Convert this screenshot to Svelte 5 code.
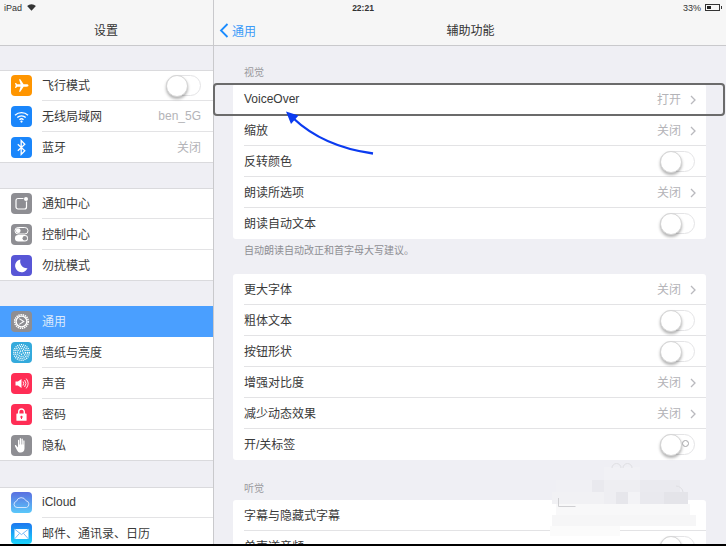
<script>
	const groups = [
		[
			{ label: '飞行模式', icon: 'plane', bg: '#ff9500', toggle: true },
			{ label: '无线局域网', icon: 'wifi', bg: '#1a86fb', value: 'ben_5G' },
			{ label: '蓝牙', icon: 'bluetooth', bg: '#1a86fb', value: '关闭' }
		],
		[
			{ label: '通知中心', icon: 'notify', bg: '#8e8e93' },
			{ label: '控制中心', icon: 'control', bg: '#8e8e93' },
			{ label: '勿扰模式', icon: 'moon', bg: '#5856d6' }
		],
		[
			{ label: '通用', icon: 'gear', bg: '#8e8e93', active: true },
			{ label: '墙纸与亮度', icon: 'flower', bg: '#34aadc' },
			{ label: '声音', icon: 'sound', bg: '#ff2d55' },
			{ label: '密码', icon: 'lock', bg: '#ff2d55' },
			{ label: '隐私', icon: 'hand', bg: '#8e8e93' }
		],
		[
			{ label: 'iCloud', icon: 'cloud', bg: 'linear-gradient(#5a6fe0,#5ac8fa)' },
			{ label: '邮件、通讯录、日历', icon: 'mail', bg: 'linear-gradient(#1d77ef,#1ad5fd)' }
		]
	];

	const sections = [
		{
			title: '视觉',
			note: '自动朗读自动改正和首字母大写建议。',
			rows: [
				{ label: 'VoiceOver', value: '打开' },
				{ label: '缩放', value: '关闭' },
				{ label: '反转颜色', toggle: true },
				{ label: '朗读所选项', value: '关闭' },
				{ label: '朗读自动文本', toggle: true }
			]
		},
		{
			rows: [
				{ label: '更大字体', value: '关闭' },
				{ label: '粗体文本', toggle: true },
				{ label: '按钮形状', toggle: true },
				{ label: '增强对比度', value: '关闭' },
				{ label: '减少动态效果', value: '关闭' },
				{ label: '开/关标签', toggle: true, ring: true }
			]
		},
		{
			title: '听觉',
			rows: [
				{ label: '字幕与隐藏式字幕' },
				{ label: '单声道音频', toggle: true }
			]
		}
	];

	// smudge that hides a watermark in the original shot
	const mosaic = [
		{ x: 604, y: 467, w: 36, h: 13, c: '#f1f1f5' },
		{ x: 556, y: 480, w: 36, h: 12, c: '#f0f0f4' },
		{ x: 592, y: 480, w: 12, h: 12, c: '#e9e9ee' },
		{ x: 604, y: 480, w: 36, h: 12, c: '#eeeef2' },
		{ x: 640, y: 480, w: 40, h: 12, c: '#eaeaef' },
		{ x: 552, y: 492, w: 52, h: 12, c: '#f1f1f4' },
		{ x: 604, y: 492, w: 12, h: 12, c: '#eeeef2' },
		{ x: 616, y: 492, w: 12, h: 12, c: '#e6e6eb' },
		{ x: 628, y: 492, w: 12, h: 12, c: '#f3f3f6' },
		{ x: 640, y: 492, w: 24, h: 12, c: '#e9e9ee' },
		{ x: 664, y: 492, w: 24, h: 12, c: '#e4e4e9' },
		{ x: 556, y: 504, w: 134, h: 11, c: '#f8f8f9' },
		{ x: 552, y: 515, w: 144, h: 11, c: '#f6f6f7' },
		{ x: 550, y: 526, w: 70, h: 10, c: '#fbfbfb' }
	];
</script>

{#snippet icon(name)}
	<svg viewBox="0 0 21 21" width="21" height="21">
		{#if name === 'plane'}
			<path fill="#fff" d="M17.5 10.500c0-.8-1-1.200-2-1.200h-2.900L9.300 4.200H8l1.600 5.100H6.200L5 7.900H4l.7 2.600L4 13.100h1l1.200-1.400h3.400L8 16.800h1.300l3.300-5.100h2.900c1 0 2-.4 2-1.200z" />
		{:else if name === 'wifi'}
			<g fill="none" stroke="#fff" stroke-width="1.400">
				<path d="M4 9.200a9.400 9.400 0 0 1 13 0" />
				<path d="M6.300 11.600a6 6 0 0 1 8.400 0" />
				<path d="M8.500 13.800a2.900 2.900 0 0 1 4 0" />
			</g>
			<circle cx="10.500" cy="15.600" r="1.100" fill="#fff" />
		{:else if name === 'bluetooth'}
			<path fill="none" stroke="#fff" stroke-width="1.300" d="M6.800 7.200l7 6.600-3.600 3.600V3.600l3.600 3.600-7 6.600" />
		{:else if name === 'notify'}
			<rect x="5" y="5.500" width="10.500" height="10.500" rx="2" fill="none" stroke="#fff" stroke-width="1.200" />
			<circle cx="15" cy="6" r="2.600" fill="#8e8e93" />
			<circle cx="15" cy="6" r="2" fill="#fff" />
		{:else if name === 'control'}
			<rect x="4" y="3.500" width="13" height="6.500" rx="3.200" fill="none" stroke="#fff" stroke-width="1" />
			<circle cx="7.200" cy="6.700" r="2.400" fill="#fff" />
			<rect x="4" y="11" width="13" height="6.500" rx="3.200" fill="#fff" />
			<circle cx="13.800" cy="14.200" r="2.300" fill="#8e8e93" />
		{:else if name === 'moon'}
			<path fill="#fff" d="M9.500 4.500a6.400 6.400 0 1 0 7 8.600 6.600 6.600 0 0 1-7-8.600z" />
		{:else if name === 'gear'}
			<circle cx="10.500" cy="10.500" r="6.800" fill="none" stroke="#fff" stroke-width="1.600" stroke-dasharray="1.400 0.800" />
			<circle cx="10.500" cy="10.500" r="5.400" fill="none" stroke="#fff" stroke-width="1.300" />
			<path fill="#fff" d="M8.600 7.200l5.200 3.300-5.200 3.300-.6-.9 3.800-2.400-3.800-2.400z" />
		{:else if name === 'flower'}
			<g fill="none" stroke="#fff" stroke-width="1.300" stroke-dasharray="1.100 0.900">
				<circle cx="10.500" cy="10.500" r="1.800" />
				<circle cx="10.500" cy="10.500" r="4" />
				<circle cx="10.500" cy="10.500" r="6" />
				<circle cx="10.500" cy="10.500" r="7.800" />
			</g>
		{:else if name === 'sound'}
			<path fill="#fff" d="M4.500 8.500h2.400L10.500 6v9l-3.600-2.500H4.500z" />
			<g fill="none" stroke="#fff" stroke-width="0.900">
				<path d="M12 8.500a3.400 3.400 0 0 1 0 4" />
				<path d="M13.600 7a5.600 5.600 0 0 1 0 7" />
				<path d="M15.200 5.600a7.800 7.800 0 0 1 0 9.800" />
			</g>
		{:else if name === 'lock'}
			<path fill="none" stroke="#fff" stroke-width="1.400" d="M7.700 10V7.800a2.800 2.800 0 0 1 5.600 0V10" />
			<path fill="#fff" fill-rule="evenodd" d="M6 9.600h9a.6.6 0 0 1 .6.6v6a.6.6 0 0 1-.6.6H6a.6.6 0 0 1-.6-.6v-6a.6.6 0 0 1 .6-.6zM10.500 11.800a1.100 1.100 0 0 0-.5 2.100v1.100h1v-1.100a1.100 1.100 0 0 0-.5-2.100z" />
		{:else if name === 'hand'}
			<path fill="#fff" d="M7 5.500c0-1 1.200-1 1.200 0v4h.5V3.800c0-1 1.300-1 1.300 0v5.700h.5V4.300c0-1 1.300-1 1.300 0v5.300h.5V6c0-1 1.200-1 1.200 0v7.500c0 2.400-1.600 4-3.800 4-2 0-3-1-3.800-2.600L4 11.200c-.4-1 .7-1.500 1.300-.7L7 12.500z" />
		{:else if name === 'cloud'}
			<path fill="none" stroke="#dfeaff" stroke-width="0.900" d="M6 15.500a3.200 3.200 0 0 1-.5-6.300 5 5 0 0 1 9.400-.5 3.500 3.500 0 0 1 .6 6.800z" />
		{:else if name === 'mail'}
			<rect x="3.500" y="6" width="14" height="10" fill="#fff" />
			<path fill="none" stroke="#5aa8f5" stroke-width="0.800" d="M3.500 6l7 5.600 7-5.600M3.500 16l5-5.600M17.500 16l-5-5.600" />
		{/if}
	</svg>
{/snippet}

{#snippet toggle(ring)}
	<span class="toggle">
		<span class="knob"></span>
		{#if ring}<span class="ring"></span>{/if}
	</span>
{/snippet}

<div class="screen">
	<div class="panes">
		<aside class="sidebar">
			<header class="nav"><span class="title">设置</span></header>
			{#each groups as rows}
				<ul class="group">
					{#each rows as row}
						<li class="side-row" class:active={row.active}>
							<span class="app-icon" style="background: {row.bg}">{@render icon(row.icon)}</span>
							<span class="side-inner">
								<span class="label">{row.label}</span>
								{#if row.toggle}
									{@render toggle(false)}
								{:else if row.value}
									<span class="value">{row.value}</span>
								{/if}
							</span>
						</li>
					{/each}
				</ul>
			{/each}
		</aside>

		<main class="detail">
			<header class="nav detail-nav">
				<span class="back">
					<svg viewBox="0 0 10 15" width="10" height="15">
						<path d="M8.500 1L2 7.500 8.500 14" fill="none" stroke="#1a8cff" stroke-width="1.800" />
					</svg>
					通用
				</span>
				<span class="title">辅助功能</span>
			</header>

			{#each sections as section, i}
				<div class="section-head" class:first={i === 0}>{section.title ?? ''}</div>
				<ul class="card">
					{#each section.rows as row}
						<li class="row">
							<span class="row-inner">
								<span class="label">{row.label}</span>
								{#if row.toggle}
									{@render toggle(row.ring)}
								{:else if row.value}
									<span class="value">{row.value}</span>
									<svg class="chevron" viewBox="0 0 6 10" width="6" height="10">
										<path d="M1 1l4 4-4 4" fill="none" stroke="#b9b9be" stroke-width="1.300" />
									</svg>
								{/if}
							</span>
						</li>
					{/each}
				</ul>
				{#if section.note}<p class="note">{section.note}</p>{/if}
			{/each}
		</main>
	</div>
	<div class="black-edge"></div>

	<div class="status">
		<span class="status-left">
			iPad
			<svg viewBox="0 0 10 8" width="9" height="7">
				<path fill="#333" d="M5 7.600L0 2.400a7.200 7.200 0 0 1 10 0z" />
			</svg>
		</span>
		<span class="status-time">22:21</span>
		<span class="status-right">
			33%
			<span class="battery"><span class="charge"></span></span>
		</span>
	</div>

	<div class="highlight"></div>

	{#each mosaic as m}
		<div class="smudge" style="left: {m.x}px; top: {m.y}px; width: {m.w}px; height: {m.h}px; background: {m.c}"></div>
	{/each}

	<svg class="overlay" viewBox="0 0 726 546" width="726" height="546">
		<path d="M373 153.500C340 149 313 137 293 118" fill="none" stroke="#0b3bf0" stroke-width="2.300" />
		<path d="M286 111.500L298.500 115.500 291 124z" fill="#0b3bf0" />
		<!-- bits of the watermark that show round the smudge -->
		<path d="M612 468a4 4 0 0 1 9 0M623 468a4 4 0 0 1 9 0M676 486a7 7 0 0 1 7 6" fill="none" stroke="#dfdfe3" stroke-width="1" />
		<path d="M558.500 498v8.500h17" fill="none" stroke="#cfcfd2" stroke-width="1" />
	</svg>
</div>

<style>
	:global(body) {
		margin: 0;
		background: #000;
	}

	ul {
		list-style: none;
		margin: 0;
		padding: 0;
	}

	.screen {
		position: relative;
		width: 726px;
		height: 546px;
		overflow: hidden;
		display: flex;
		flex-direction: column;
		font-family: "Liberation Sans", "Noto Sans CJK SC", sans-serif;
		font-size: 12px;
		color: #3a3a3a;
		background: #efeff4;
	}

	.panes {
		display: flex;
		height: 544px;
		overflow: hidden;
	}

	.black-edge {
		height: 2px;
		background: #000;
	}

	.sidebar {
		width: 213px;
		flex: none;
		border-right: 1px solid #c9c9cc;
		background: #efeff4;
	}

	.detail {
		flex: 1;
		background: #efeff4;
	}

	.nav {
		height: 29px;
		padding-top: 15px;
		padding-bottom: 1px;
		display: flex;
		align-items: center;
		justify-content: center;
		position: relative;
		background: #f6f6f6;
		border-bottom: 1px solid #c9c9cc;
	}

	.title {
		font-size: 12px;
		color: #333;
	}

	.sidebar .title {
		margin-right: 1px;
	}

	.detail-nav .title {
		margin-left: 1px;
	}

	.back {
		position: absolute;
		left: 5px;
		top: 15px;
		height: 30px;
		display: flex;
		align-items: center;
		gap: 3px;
		color: #3b9bf8;
	}

	.group {
		margin-bottom: 25px;
		background: #fff;
		box-shadow: inset 0 1px 0 #dadadd, inset 0 -1px 0 #dadadd;
	}

	.nav + .group {
		margin-top: 24px;
	}

	.group:last-child {
		margin-top: 26px;
	}

	.group:nth-child(4) {
		margin-bottom: 0;
	}

	.side-row {
		height: 31px;
		display: flex;
		align-items: center;
		padding-left: 11px;
	}

	.side-row.active {
		background: #4a9fff;
		color: #dbe9fb;
	}

	.app-icon {
		width: 21px;
		height: 21px;
		border-radius: 4px;
		flex: none;
		display: flex;
	}

	.side-inner {
		flex: 1;
		align-self: stretch;
		margin-left: 10px;
		padding-right: 12px;
		display: flex;
		align-items: center;
		justify-content: space-between;
		box-shadow: inset 0 -1px 0 #e3e3e5;
	}

	.side-row:last-child .side-inner,
	.side-row.active .side-inner {
		box-shadow: none;
	}

	.label,
	.value {
		padding-bottom: 2px;
	}

	.value {
		color: #b4b4b8;
	}

	.section-head {
		padding: 22px 0 0 11px;
		margin-left: 19px;
		height: 18px;
		line-height: 14px;
		font-size: 10px;
		color: #9a9a9e;
	}

	.section-head.first {
		padding-top: 20px;
	}

	.section-head:empty {
		display: none;
	}

	.card {
		margin: 0 20px 0 19px;
		background: #fff;
		border-radius: 3px;
	}

	.row {
		height: 31px;
		padding-left: 11px;
	}

	.row-inner {
		height: 100%;
		padding-right: 11px;
		display: flex;
		align-items: center;
		box-shadow: inset 0 -1px 0 #e3e3e5;
	}

	.row:last-child .row-inner {
		box-shadow: none;
	}

	.row-inner .label {
		flex: 1;
	}

	.chevron {
		margin-left: 9px;
		margin-right: -1px;
	}

	.note {
		margin: 0 0 0 30px;
		height: 35px;
		padding-top: 5px;
		box-sizing: border-box;
		line-height: 14px;
		font-size: 10px;
		color: #8e8e93;
	}

	.toggle {
		position: relative;
		width: 35px;
		height: 21px;
		box-sizing: border-box;
		border: 1px solid #e4e4e6;
		border-radius: 11px;
		background: #fff;
		flex: none;
	}

	.knob {
		position: absolute;
		left: -1px;
		top: -1px;
		width: 20px;
		height: 20px;
		border-radius: 50%;
		background: #fff;
		border: 0.5px solid #d5d5d5;
		box-shadow: 0 2px 3px rgba(0, 0, 0, 0.3);
	}

	.ring {
		position: absolute;
		right: 5px;
		top: 5px;
		width: 7px;
		height: 7px;
		box-sizing: border-box;
		border: 1px solid #a5a5a8;
		border-radius: 50%;
	}

	.status {
		position: absolute;
		left: 0;
		top: 0;
		width: 100%;
		height: 15px;
		font-size: 9px;
		color: #333;
		display: grid;
		grid-template-columns: 1fr auto 1fr;
		align-items: center;
	}

	.status-left {
		padding-left: 4px;
		display: flex;
		align-items: center;
		gap: 5px;
	}

	.status-time {
		font-weight: bold;
		font-size: 8.500px;
	}

	.status-right {
		justify-self: end;
		padding-right: 6px;
		display: flex;
		align-items: center;
		gap: 4px;
	}

	.battery {
		width: 15px;
		height: 7px;
		box-sizing: border-box;
		border: 1px solid #333;
		padding: 1px;
		display: flex;
		position: relative;
	}

	.battery::after {
		content: '';
		position: absolute;
		right: -3px;
		top: 1px;
		width: 1.500px;
		height: 3px;
		background: #333;
	}

	.charge {
		width: 4px;
		background: #222;
	}

	.highlight {
		position: absolute;
		left: 213px;
		top: 83px;
		width: 512px;
		height: 33px;
		box-sizing: border-box;
		border: 2px solid #6b6b6b;
		border-radius: 4px;
	}

	.overlay {
		position: absolute;
		left: 0;
		top: 0;
		pointer-events: none;
	}

	.smudge {
		position: absolute;
	}
</style>
